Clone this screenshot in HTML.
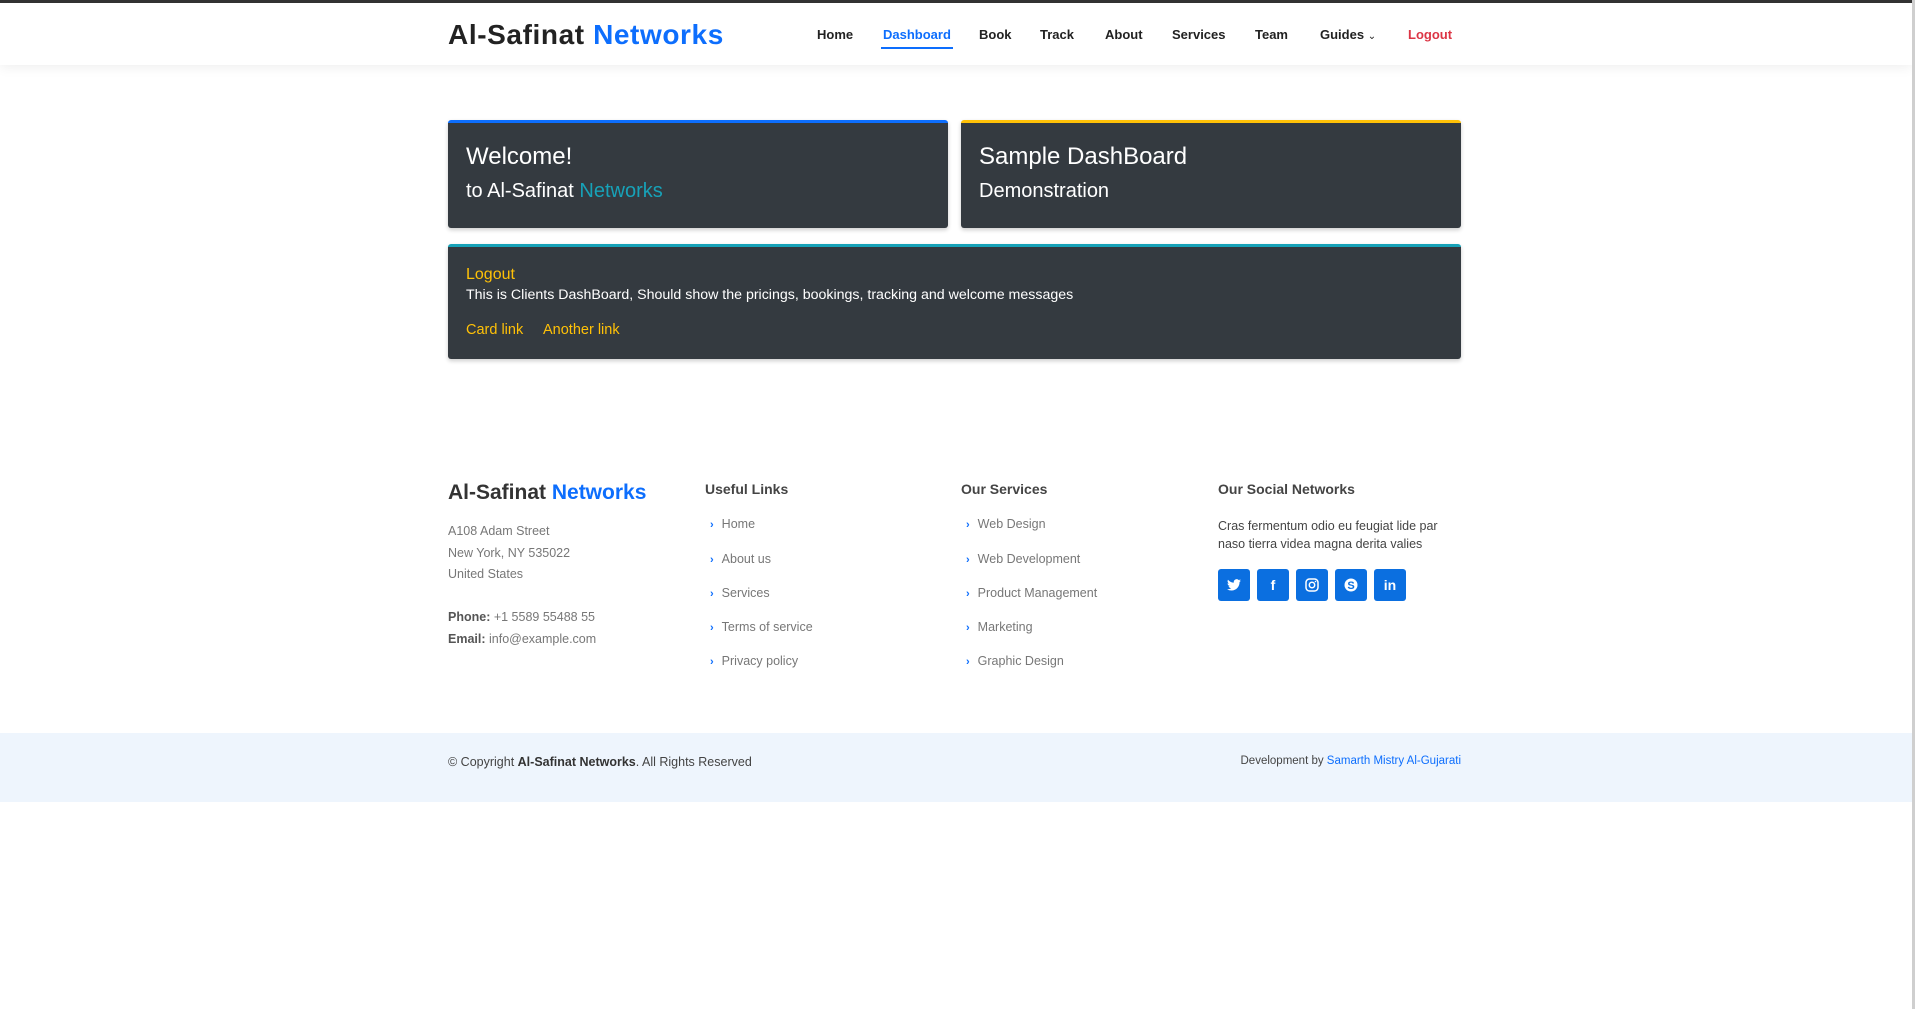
<!DOCTYPE html>
<html><head><meta charset="utf-8"><style>
*{box-sizing:border-box;margin:0;padding:0}
body{width:1915px;height:1009px;background:#fff;font-family:"Liberation Sans",sans-serif;position:relative;overflow:hidden;color:#444}
.a{position:absolute;white-space:nowrap}
#top{position:absolute;left:0;top:0;width:1915px;height:3px;background:#333}
#hdr{position:absolute;left:0;top:3px;width:1912px;height:62px;background:#fff;box-shadow:0 2px 12px rgba(0,0,0,.07)}
#sb{position:absolute;left:1912px;top:0;width:3px;height:1009px;background:#cfcfcf}
.nav{font-size:13px;font-weight:bold;color:#222;top:27px}
.card{position:absolute;background:#343a40;border-radius:3px;box-shadow:0 2px 4px rgba(0,0,0,.2);color:#fff}
.ft{font-size:12.5px;color:#777}
.lk{font-size:12.5px;color:#777}
.lk b{color:#0d6efd;font-weight:bold;margin-right:8px;font-size:11px}
.ic{position:absolute;top:569px;width:32px;height:32px;background:#0b6fe0;border-radius:3px;color:#fff;font-weight:bold;font-size:14px;text-align:center;line-height:32px}
</style></head><body>
<div id="top"></div>
<div id="hdr"></div>
<div id="sb"></div>
<div class="a" style="left:448px;top:19px;font-size:28px;font-weight:bold;color:#222;letter-spacing:0.6px">Al-Safinat <span style="color:#0d6efd">Networks</span></div>
<div class="a nav" style="left:817px">Home</div>
<div class="a nav" style="left:883px;color:#0d6efd">Dashboard</div>
<div class="a" style="left:881px;top:47px;width:72px;height:2px;background:#0d6efd"></div>
<div class="a nav" style="left:979px">Book</div>
<div class="a nav" style="left:1040px">Track</div>
<div class="a nav" style="left:1105px">About</div>
<div class="a nav" style="left:1172px">Services</div>
<div class="a nav" style="left:1255px">Team</div>
<div class="a nav" style="left:1320px">Guides <span style="font-weight:normal;font-size:10px">&#8964;</span></div>
<div class="a nav" style="left:1408px;color:#dc3545">Logout</div>

<div class="card" style="left:448px;top:120px;width:500px;height:108px;border-top:3px solid #0d6efd">
 <div class="a" style="left:18px;top:20px;font-size:24px">Welcome!</div>
 <div class="a" style="left:18px;top:57px;font-size:20px">to Al-Safinat <span style="color:#17a2b8">Networks</span></div>
</div>
<div class="card" style="left:961px;top:120px;width:500px;height:108px;border-top:3px solid #ffc107">
 <div class="a" style="left:18px;top:20px;font-size:24px">Sample DashBoard</div>
 <div class="a" style="left:18px;top:57px;font-size:20px">Demonstration</div>
</div>
<div class="card" style="left:448px;top:244px;width:1013px;height:115px;border-top:3px solid #17a2b8">
 <div class="a" style="left:18px;top:19px;font-size:16px;color:#ffc107">Logout</div>
 <div class="a" style="left:18px;top:40px;font-size:14.2px">This is Clients DashBoard, Should show the pricings, bookings, tracking and welcome messages</div>
 <div class="a" style="left:18px;top:75px;font-size:14.5px;color:#ffc107">Card link</div>
 <div class="a" style="left:95px;top:75px;font-size:14.5px;color:#ffc107">Another link</div>
</div>

<div class="a" style="left:448px;top:481px;font-size:21px;font-weight:bold;color:#333">Al-Safinat <span style="color:#0d6efd">Networks</span></div>
<div class="a ft" style="left:448px;top:524px">A108 Adam Street</div>
<div class="a ft" style="left:448px;top:546px">New York, NY 535022</div>
<div class="a ft" style="left:448px;top:567px">United States</div>
<div class="a ft" style="left:448px;top:610px"><b style="color:#555">Phone:</b> +1 5589 55488 55</div>
<div class="a ft" style="left:448px;top:632px"><b style="color:#555">Email:</b> info@example.com</div>

<div class="a" style="left:705px;top:481px;font-size:14px;font-weight:bold;color:#444">Useful Links</div>
<div class="a lk" style="left:710px;top:517px"><b>&#8250;</b>Home</div>
<div class="a lk" style="left:710px;top:552px"><b>&#8250;</b>About us</div>
<div class="a lk" style="left:710px;top:586px"><b>&#8250;</b>Services</div>
<div class="a lk" style="left:710px;top:620px"><b>&#8250;</b>Terms of service</div>
<div class="a lk" style="left:710px;top:654px"><b>&#8250;</b>Privacy policy</div>

<div class="a" style="left:961px;top:481px;font-size:14px;font-weight:bold;color:#444">Our Services</div>
<div class="a lk" style="left:966px;top:517px"><b>&#8250;</b>Web Design</div>
<div class="a lk" style="left:966px;top:552px"><b>&#8250;</b>Web Development</div>
<div class="a lk" style="left:966px;top:586px"><b>&#8250;</b>Product Management</div>
<div class="a lk" style="left:966px;top:620px"><b>&#8250;</b>Marketing</div>
<div class="a lk" style="left:966px;top:654px"><b>&#8250;</b>Graphic Design</div>

<div class="a" style="left:1218px;top:481px;font-size:14px;font-weight:bold;color:#444">Our Social Networks</div>
<div class="a" style="left:1218px;top:517px;font-size:12.5px;color:#444;line-height:18px">Cras fermentum odio eu feugiat lide par<br>naso tierra videa magna derita valies</div>
<div class="ic" style="left:1218px"><svg width="14" height="12" viewBox="0 0 24 20" style="margin-top:10px"><path fill="#fff" d="M24 2.4a10 10 0 0 1-2.8.8A5 5 0 0 0 23.3.4a10 10 0 0 1-3.1 1.2A4.9 4.9 0 0 0 11.8 6 14 14 0 0 1 1.7.9a4.9 4.9 0 0 0 1.5 6.6A4.9 4.9 0 0 1 1 6.9 4.9 4.9 0 0 0 4.9 11.8a5 5 0 0 1-2.2.1 4.9 4.9 0 0 0 4.6 3.4A9.9 9.9 0 0 1 0 17.3 14 14 0 0 0 7.5 19.5c9 0 14-7.5 14-14v-.6A10 10 0 0 0 24 2.4z"/></svg></div>
<div class="ic" style="left:1257px">f</div>
<div class="ic" style="left:1296px"><svg width="14" height="14" viewBox="0 0 14 14" style="margin-top:9px"><rect x="1" y="1" width="12" height="12" rx="3.5" fill="none" stroke="#fff" stroke-width="1.5"/><circle cx="7" cy="7" r="2.7" fill="none" stroke="#fff" stroke-width="1.5"/><circle cx="10.5" cy="3.5" r=".8" fill="#fff"/></svg></div>
<div class="ic" style="left:1335px"><svg width="14" height="14" viewBox="0 0 14 14" style="margin-top:9px"><circle cx="7" cy="7" r="6.5" fill="#fff"/><text x="7" y="11" font-size="11" font-weight="bold" text-anchor="middle" fill="#0b6fe0" font-family="Liberation Sans">S</text></svg></div>
<div class="ic" style="left:1374px">in</div>

<div class="a" style="left:0;top:733px;width:1912px;height:69px;background:#eef5fd"></div>
<div class="a" style="left:448px;top:755px;font-size:12.5px;color:#444">© Copyright <b style="color:#333">Al-Safinat Networks</b>. All Rights Reserved</div>
<div class="a" style="right:454px;top:755px;font-size:11.5px;color:#444">Development by <span style="color:#0d6efd">Samarth Mistry Al-Gujarati</span></div>
</body></html>
